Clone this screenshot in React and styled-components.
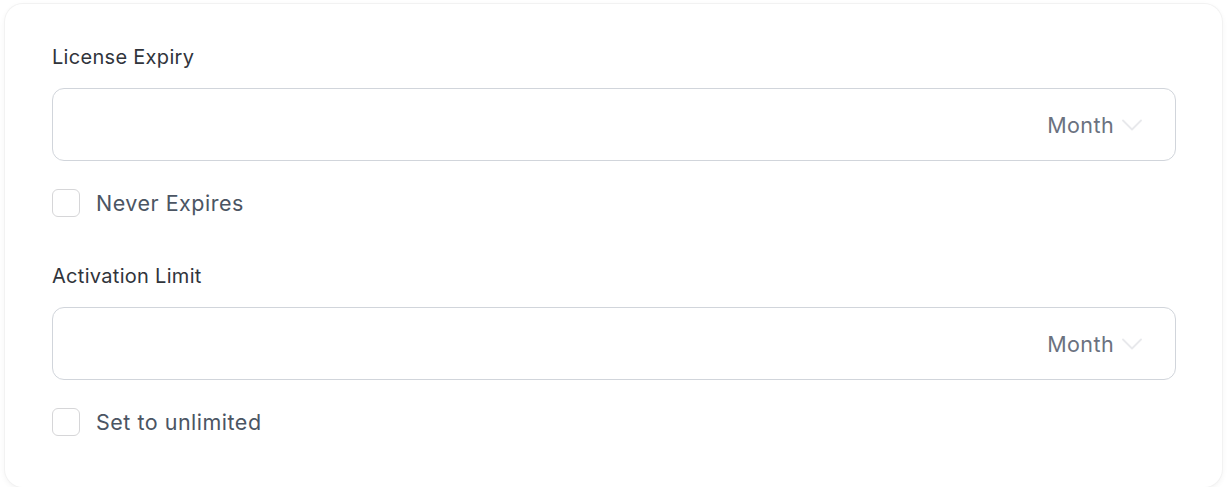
import React from 'react';
import styled, { createGlobalStyle } from 'styled-components';

const GlobalStyle = createGlobalStyle`
  body {
    margin: 0;
    background: #ffffff;
    font-family: Inter, "Noto Sans", sans-serif;
  }
`;

const Page = styled.div`
  padding: 4px 6px 0 5px;
`;

const Card = styled.div`
  background: #fff;
  border-radius: 18px;
  box-shadow: 0 0 0 1px #f2f2f2, 0 2px 6px rgba(0, 0, 0, 0.06);
  padding: 39px 46px 51px 47px;
  display: flex;
  flex-direction: column;
`;

const Field = styled.div`
  display: flex;
  flex-direction: column;
  margin-top: ${({ first }) => (first ? '0' : '45px')};
`;

const Label = styled.div`
  font-size: 20px;
  line-height: 28px;
  letter-spacing: 0.3px;
  color: #30343b;
  margin-bottom: 17px;
`;

const InputBox = styled.div`
  height: 73px;
  box-sizing: border-box;
  border: 1px solid #d1d5db;
  border-radius: 12px;
  display: flex;
  align-items: center;
  justify-content: flex-end;
  padding-right: 33px;
  gap: 8px;
`;

const Unit = styled.span`
  font-size: 21.5px;
  letter-spacing: 0.4px;
  color: #6b7280;
`;

const CheckRow = styled.label`
  display: flex;
  align-items: center;
  gap: 16px;
  margin-top: 28px;
`;

const Box = styled.span`
  width: 28px;
  height: 28px;
  box-sizing: border-box;
  border: 1.5px solid #d6d6d8;
  border-radius: 6px;
`;

const CheckText = styled.span`
  font-size: 21.5px;
  line-height: 28px;
  letter-spacing: 0.5px;
  color: #4b5563;
`;

const Chevron = () => (
  <svg width="20" height="12" viewBox="0 0 20 12" fill="none" stroke="#e8e9ec" strokeWidth="1.8" strokeLinecap="round" strokeLinejoin="round">
    <path d="M1 1.5l9 9 9-9" />
  </svg>
);

const Section = ({ label, check, first }) => (
  <Field first={first}>
    <Label>{label}</Label>
    <InputBox>
      <Unit>Month</Unit>
      <Chevron />
    </InputBox>
    <CheckRow>
      <Box />
      <CheckText>{check}</CheckText>
    </CheckRow>
  </Field>
);

const App = () => (
  <Page>
    <GlobalStyle />
    <Card>
      <Section first label="License Expiry" check="Never Expires" />
      <Section label="Activation Limit" check="Set to unlimited" />
    </Card>
  </Page>
);

export default App;
